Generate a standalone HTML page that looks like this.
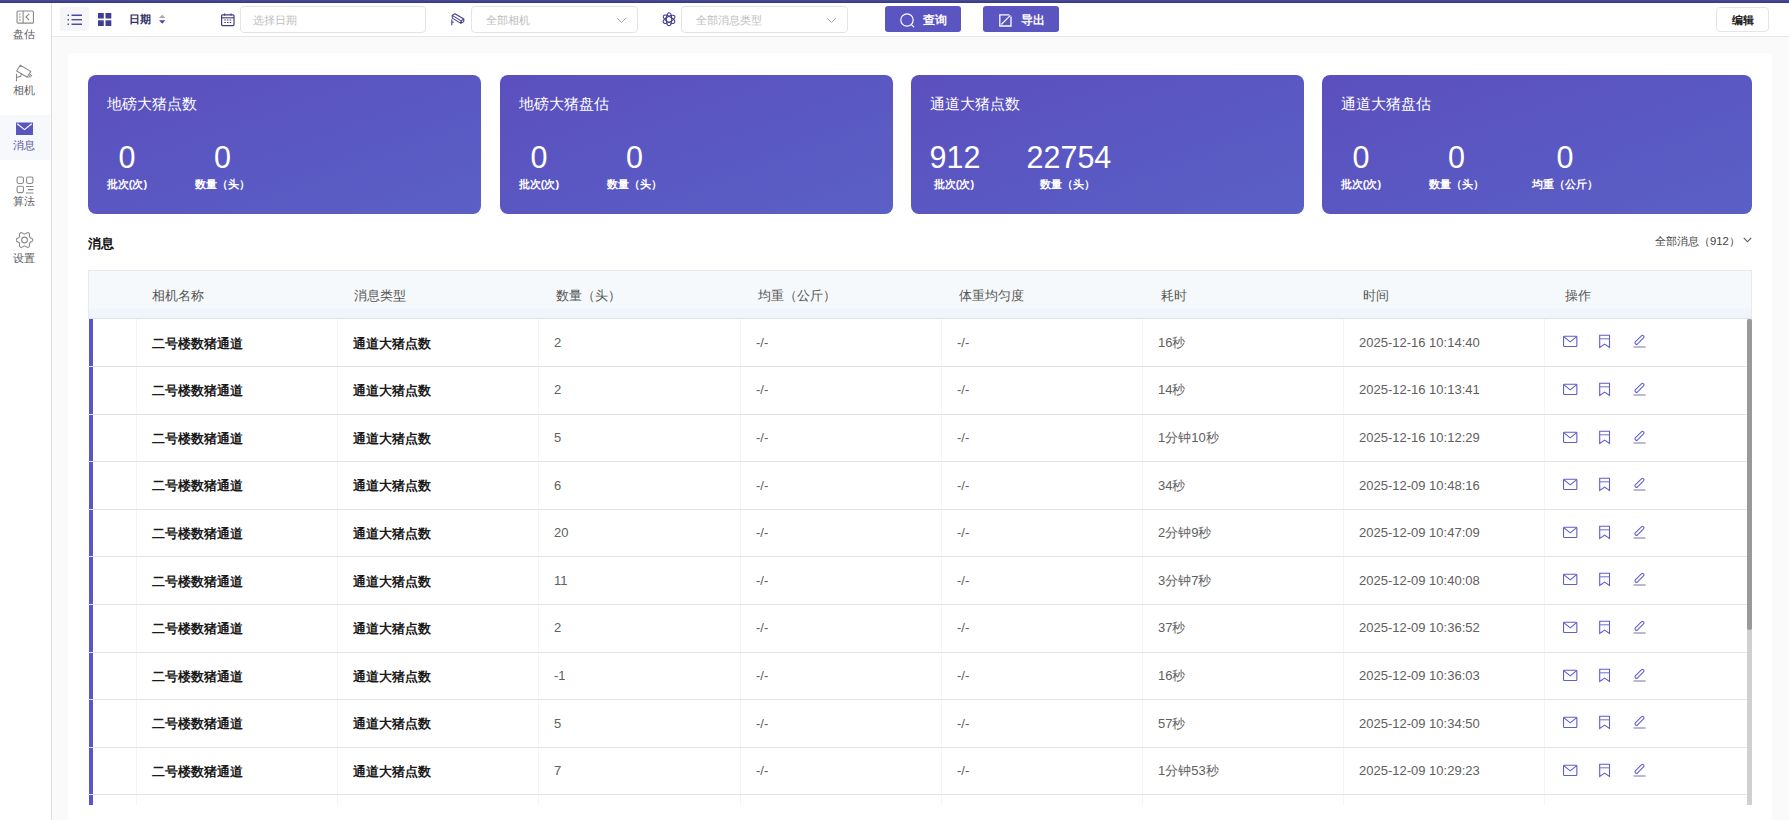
<!DOCTYPE html>
<html><head><meta charset="utf-8"><style>
*{box-sizing:border-box;margin:0;padding:0}
html,body{width:1789px;height:820px;overflow:hidden;background:#fff;font-family:"Liberation Sans",sans-serif;color:#333}
.abs{position:absolute}
#topbar{position:absolute;left:0;top:0;width:1789px;height:2.5px;background:linear-gradient(180deg,#464b93 0%,#454a92 40%,#3a3987 60%,#3a3987 100%)}
#sidebar{position:absolute;left:0;top:2.5px;width:52px;height:818px;background:#fff;border-right:1px solid #dedede}
.nav{position:absolute;left:0;width:51px;height:46px}
.nav.active{background:#f7f8fc;height:45px}
.nav.active span{color:#5552a0}
.nav svg{position:absolute;left:15px}
.nav span{position:absolute;left:0;width:48px;text-align:center;font-size:11px;line-height:12px;color:#5c5c66}
#toolbar{position:absolute;left:52px;top:2.5px;width:1737px;height:34px;background:#fff;border-bottom:1px solid #e6e6e6}
#gray{position:absolute;left:52px;top:37px;width:1737px;height:783px;background:#fafafa}
#panel{position:absolute;left:68px;top:53.3px;width:1704px;height:800px;background:#fff;box-shadow:0 0 3px rgba(0,0,0,0.015)}
.inp{position:absolute;top:3.8px;height:26.7px;border:1px solid #e4e4e4;border-radius:4px;background:#fff;font-size:11.2px;color:#bdbdbd;line-height:26px;padding-left:11px}
.chev{position:absolute;right:10px;top:9.3px}
.btn{position:absolute;top:3.6px;height:26px;width:75.5px;border-radius:3px;background:#5b55c2;color:#fff;font-size:12px;line-height:26px;font-weight:bold}
.btn span{position:absolute;left:38px;top:1px}
.btn svg{position:absolute}
.card{position:absolute;top:74.5px;height:139.5px;border-radius:8px;background:linear-gradient(160deg,#5b4fbe 0%,#5a59c3 60%,#5b60c5 100%);color:#fff}
.card .t{position:absolute;left:18.5px;top:19.5px;font-size:15px;line-height:20px}
.stat{position:absolute;top:66.5px;text-align:center}
.stat .n{font-size:30.5px;line-height:32px;display:block;white-space:nowrap}
.stat .l{font-size:11px;line-height:14px;display:block;white-space:nowrap;margin-top:3.5px;font-weight:bold}
#sect{position:absolute;left:88px;top:236px;font-size:12.7px;font-weight:bold;color:#111;line-height:16px}
#allmsg{position:absolute;left:1655px;top:234px;font-size:11.3px;color:#444;line-height:14px;white-space:nowrap}
#table{position:absolute;left:88px;top:270.2px;width:1664px;height:560px}
#thead{position:absolute;left:0;top:0;width:1664px;height:48.8px;background:linear-gradient(180deg,#f5f9fb 0%,#f5f9fb 78%,#f0f5fc 82%,#f0f5fc 100%);border:1px solid #e6e9ed;border-bottom:1px solid #dfe3e8}
#table .h{position:absolute;top:17px;font-size:13px;line-height:16px;color:#555;white-space:nowrap}
#thead .h{margin-left:-88px;top:17px}
.row{position:absolute;left:0;width:1659px;height:47.6px;border-bottom:1px solid #e3e3e3;background:transparent}
.row .bar{position:absolute;left:1px;top:0;width:4px;height:100%;background:#5b55c8}
.row .c{position:absolute;margin-left:-88px;top:15.5px;font-size:13px;line-height:16px;color:#606060;white-space:nowrap}
.row .c.b{color:#1a1a1a;font-weight:bold;top:16.3px}
.ops svg{position:absolute;margin-left:-88px}
.vl{position:absolute;top:48.8px;width:1px;height:486px;background:#f4f4f4;margin-left:-88px}
#table>.vl{}
#sb-track{position:absolute;left:1659px;top:48.8px;width:5px;height:486px;background:#d0d0d0}
#sb-thumb{position:absolute;left:1659px;top:48.8px;width:5px;height:311px;border-radius:3px;background:#9a9a9a}

</style></head><body>
<div id="topbar"></div>
<div id="gray"></div>
<div id="panel"></div>
<div id="sidebar">
  <div class="nav" style="top:0">
    <svg width="19" height="15" viewBox="0 0 19 15" style="top:7.5px;left:15.5px"><rect x="1.05" y="0.95" width="16.4" height="12.2" rx="1" fill="none" stroke="#8a8a8a" stroke-width="1.1"/><path d="M7.1 1 V13.1" stroke="#8a8a8a" stroke-width="1.1"/><path d="M3.9 3.4 V5.2 M3.9 6.2 V8 M3.9 9 V10.8" stroke="#8a8a8a" stroke-width="1"/><path d="M13.2 3.8 L9.9 7 L13.2 10.2" fill="none" stroke="#8a8a8a" stroke-width="1.1"/></svg>
    <span style="top:25px">盘估</span>
  </div>
  <div class="nav" style="top:55px">
    <svg width="19" height="19" viewBox="0 0 19 19" style="top:6px"><path d="M5.2 1.2 L15.8 7.4 L12.3 13.2 L1.7 7 Z" fill="none" stroke="#8a8a8a" stroke-width="1.1" stroke-linejoin="round"/><path d="M15.96 9.85 L13.69 13.62 M16.91 10.79 L15.33 13.4" stroke="#8a8a8a" stroke-width="1"/><path d="M1.5 9.8 V17.2 M1.5 13.6 L5.6 12.3 L6.6 9.9" fill="none" stroke="#8a8a8a" stroke-width="1.1"/></svg>
    <span style="top:26.5px">相机</span>
  </div>
  <div class="nav active" style="top:112px">
    <svg width="19" height="14" viewBox="0 0 19 14" style="top:7.5px"><rect x="1" y="0.5" width="17" height="12.5" fill="#5b55c2"/><path d="M2.2 1.8 L9.5 7.6 L16.8 1.8" fill="none" stroke="#fff" stroke-width="1.2"/></svg>
    <span style="top:24.5px">消息</span>
  </div>
  <div class="nav" style="top:167px">
    <svg width="19" height="18" viewBox="0 0 19 18" style="top:6px;left:15.5px"><rect x="1.05" y="1.05" width="6.4" height="6.4" rx="1.6" fill="none" stroke="#8a8a8a" stroke-width="1.1"/><rect x="10.55" y="1.05" width="6.4" height="6.4" rx="1.6" fill="none" stroke="#8a8a8a" stroke-width="1.1"/><rect x="1.05" y="10.25" width="6.4" height="6.4" rx="1.6" fill="none" stroke="#8a8a8a" stroke-width="1.1"/><path d="M10 10.4 H17.5 M12 13.6 H17.5 M10 16.9 H17.5" stroke="#8a8a8a" stroke-width="1.05"/></svg>
    <span style="top:25.5px">算法</span>
  </div>
  <div class="nav" style="top:223px">
    <svg width="19" height="17" viewBox="0 0 19 17" style="top:6.5px;left:15.5px"><path d="M16.75 8.00 L16.68 7.57 L16.49 7.16 L16.18 6.78 L15.79 6.45 L15.36 6.16 L14.91 5.92 L14.50 5.70 L14.14 5.49 L13.85 5.27 L13.65 5.03 L13.54 4.73 L13.49 4.37 L13.49 3.96 L13.51 3.49 L13.52 2.98 L13.49 2.46 L13.39 1.96 L13.22 1.50 L12.96 1.13 L12.62 0.86 L12.22 0.70 L11.77 0.66 L11.29 0.74 L10.80 0.91 L10.34 1.14 L9.90 1.40 L9.50 1.66 L9.14 1.86 L8.81 2.00 L8.50 2.05 L8.19 2.00 L7.86 1.86 L7.50 1.66 L7.10 1.40 L6.66 1.14 L6.20 0.91 L5.71 0.74 L5.23 0.66 L4.78 0.70 L4.38 0.86 L4.04 1.13 L3.78 1.50 L3.61 1.96 L3.51 2.46 L3.48 2.98 L3.49 3.49 L3.51 3.96 L3.51 4.37 L3.46 4.73 L3.35 5.03 L3.15 5.27 L2.86 5.49 L2.50 5.70 L2.09 5.92 L1.64 6.16 L1.21 6.45 L0.82 6.78 L0.51 7.16 L0.32 7.57 L0.25 8.00 L0.32 8.43 L0.51 8.84 L0.82 9.22 L1.21 9.55 L1.64 9.84 L2.09 10.08 L2.50 10.30 L2.86 10.51 L3.15 10.73 L3.35 10.97 L3.46 11.27 L3.51 11.63 L3.51 12.04 L3.49 12.51 L3.48 13.02 L3.51 13.54 L3.61 14.04 L3.78 14.50 L4.04 14.87 L4.37 15.14 L4.78 15.30 L5.23 15.34 L5.71 15.26 L6.20 15.09 L6.66 14.86 L7.10 14.60 L7.50 14.34 L7.86 14.14 L8.19 14.00 L8.50 13.95 L8.81 14.00 L9.14 14.14 L9.50 14.34 L9.90 14.60 L10.34 14.86 L10.80 15.09 L11.29 15.26 L11.77 15.34 L12.22 15.30 L12.62 15.14 L12.96 14.87 L13.22 14.50 L13.39 14.04 L13.49 13.54 L13.52 13.02 L13.51 12.51 L13.49 12.04 L13.49 11.63 L13.54 11.27 L13.65 10.97 L13.85 10.73 L14.14 10.51 L14.50 10.30 L14.91 10.08 L15.36 9.84 L15.79 9.55 L16.18 9.22 L16.49 8.84 L16.68 8.43 L16.75 8.00Z" fill="none" stroke="#8a8a8a" stroke-width="1.1" stroke-linejoin="round"/><circle cx="8.5" cy="8" r="2.9" fill="none" stroke="#8a8a8a" stroke-width="1.1"/></svg>
    <span style="top:26px">设置</span>
  </div>
</div>
<div id="toolbar">
  <div class="abs" style="left:8px;top:4.5px;width:29px;height:24px;background:#f6f6f8;border-radius:2px"></div>
  <svg class="abs" style="left:15px;top:11px" width="16" height="12" viewBox="0 0 16 12"><path d="M0.5 1.2 H2 M0.5 5.7 H2 M0.5 10.2 H2" stroke="#55558a" stroke-width="1.4"/><path d="M4.5 1.2 H15 M4.5 10.2 H15" stroke="#4a48a8" stroke-width="1.4"/><path d="M4.5 5.7 H15" stroke="#50508a" stroke-width="1.4"/></svg>
  <svg class="abs" style="left:46px;top:10px" width="14" height="14" viewBox="0 0 14 14"><rect x="0" y="0" width="5.8" height="5.5" fill="#3f3d94"/><rect x="7.5" y="0" width="5.8" height="5.5" fill="#3f3d94"/><rect x="0" y="7.3" width="5.8" height="5.7" fill="#3f3d94"/><rect x="7.5" y="7.3" width="5.8" height="5.7" fill="#3f3d94"/></svg>
  <div class="abs" style="left:77px;top:9px;font-size:11px;line-height:15px;color:#2f2f60;font-weight:bold">日期</div>
  <svg class="abs" style="left:105.5px;top:11.5px" width="9" height="11" viewBox="0 0 9 11"><path d="M1 4.1 L4.2 0.8 L7.4 4.1 Z" fill="#a8a8b0"/><path d="M1 6.2 L4.2 9.7 L7.4 6.2 Z" fill="#4a48a0"/></svg>
  <svg class="abs" style="left:169px;top:10px" width="15" height="14" viewBox="0 0 15 14"><rect x="0.6" y="1.8" width="12.4" height="10.8" rx="1" fill="none" stroke="#3f3d80" stroke-width="1.2"/><path d="M0.6 4.8 H13" stroke="#3f3d80" stroke-width="1.1"/><path d="M3.6 0.6 V2.6 M10 0.6 V2.6" stroke="#3f3d80" stroke-width="1.2"/><path d="M3.3 7 h1.5 M6 7 h1.5 M8.7 7 h1.5 M3.3 9.5 h1.5 M6 9.5 h1.5 M8.7 9.5 h1.5" stroke="#3f3d80" stroke-width="1.1"/></svg>
  <div class="inp" style="left:187.8px;width:186.7px;padding-left:11.8px">选择日期</div>
  <svg class="abs" style="left:397px;top:10.5px" width="17" height="14" viewBox="0 0 17 14"><path d="M3.2 2.4 L5.9 0.7 L14.8 6 L12.2 7.9 Z" fill="none" stroke="#3f3d88" stroke-width="1.05" stroke-linejoin="round"/><path d="M3.2 2.4 L3.3 5.1 L11.8 10.4 L14.8 8.5 L14.8 6 M12.2 7.9 L11.8 10.4" fill="none" stroke="#3f3d88" stroke-width="1.05" stroke-linejoin="round"/><path d="M2.8 6.4 V12.2 M2.8 9.6 L4.6 8.9" fill="none" stroke="#5552a0" stroke-width="1.2"/></svg>
  <div class="inp" style="left:418.5px;width:167.5px;padding-left:14px">全部相机<svg class="chev" width="11" height="7" viewBox="0 0 11 7"><path d="M1 1 L5.5 5.5 L10 1" fill="none" stroke="#a8a8a8" stroke-width="1"/></svg></div>
  <svg class="abs" style="left:610px;top:9.5px" width="15" height="15" viewBox="0 0 15 15"><g fill="none" stroke="#3f3d90" stroke-width="1.05"><ellipse cx="7" cy="7.3" rx="6.5" ry="2.7" transform="rotate(90 7 7.3)"/><ellipse cx="7" cy="7.3" rx="6.5" ry="2.7" transform="rotate(30 7 7.3)"/><ellipse cx="7" cy="7.3" rx="6.5" ry="2.7" transform="rotate(150 7 7.3)"/></g></svg>
  <div class="inp" style="left:628.8px;width:167.7px;padding-left:14.2px">全部消息类型<svg class="chev" width="11" height="7" viewBox="0 0 11 7"><path d="M1 1 L5.5 5.5 L10 1" fill="none" stroke="#a8a8a8" stroke-width="1"/></svg></div>
  <div class="btn" style="left:833px"><svg width="16" height="16" viewBox="0 0 16 16" style="left:14.5px;top:6.7px"><circle cx="7" cy="7" r="6.2" fill="none" stroke="#fff" stroke-width="1.2"/><path d="M11.4 11.6 L14 14.2" stroke="#fff" stroke-width="1.2"/></svg><span>查询</span></div>
  <div class="btn" style="left:931px"><svg width="14" height="14" viewBox="0 0 14 14" style="left:15.5px;top:7.5px"><path d="M10.3 0.8 H0.8 V12 H12 V2.6" fill="none" stroke="#fff" stroke-width="1.3"/><path d="M2.3 10.5 L11.4 1.4" stroke="#fff" stroke-width="1.1"/></svg><span>导出</span></div>
  <div class="abs" style="left:1663.8px;top:4.6px;width:53.7px;height:24.6px;border:1px solid #e5e5e5;border-radius:4px;font-size:11px;line-height:24px;text-align:center;color:#222;font-weight:bold">编辑</div>
</div>
<div class="card" style="left:88px;width:393px"><div class="t">地磅大猪点数</div>
  <div class="stat" style="left:18.5px;width:41px"><span class="n">0</span><span class="l">批次(次)</span></div>
  <div class="stat" style="left:106.5px;width:56px"><span class="n">0</span><span class="l">数量（头）</span></div>
</div>
<div class="card" style="left:500px;width:392.5px"><div class="t">地磅大猪盘估</div>
  <div class="stat" style="left:18.5px;width:41px"><span class="n">0</span><span class="l">批次(次)</span></div>
  <div class="stat" style="left:106.5px;width:56px"><span class="n">0</span><span class="l">数量（头）</span></div>
</div>
<div class="card" style="left:911px;width:392.5px"><div class="t">通道大猪点数</div>
  <div class="stat" style="left:18.5px;width:49px"><span class="n">912</span><span class="l">批次(次)</span></div>
  <div class="stat" style="left:115.5px;width:82px"><span class="n">22754</span><span class="l">数量（头）</span></div>
</div>
<div class="card" style="left:1322px;width:430px"><div class="t">通道大猪盘估</div>
  <div class="stat" style="left:18.5px;width:41px"><span class="n">0</span><span class="l">批次(次)</span></div>
  <div class="stat" style="left:106.5px;width:56px"><span class="n">0</span><span class="l">数量（头）</span></div>
  <div class="stat" style="left:209.5px;width:67px"><span class="n">0</span><span class="l">均重（公斤）</span></div>
</div>
<div id="sect">消息</div>
<div id="allmsg">全部消息（912）<svg style="position:absolute;left:88px;top:3px" width="9" height="6" viewBox="0 0 9 6"><path d="M0.8 0.8 L4.5 4.8 L8.2 0.8" fill="none" stroke="#555" stroke-width="1.1"/></svg></div>

<div id="table">
<div id="thead">
<div class="h" style="left:151px">相机名称</div>
<div class="h" style="left:353px">消息类型</div>
<div class="h" style="left:555px">数量（头）</div>
<div class="h" style="left:757px">均重（公斤）</div>
<div class="h" style="left:958px">体重均匀度</div>
<div class="h" style="left:1160px">耗时</div>
<div class="h" style="left:1362px">时间</div>
<div class="h" style="left:1564px">操作</div>
</div>
<div class="vl" style="left:136px"></div><div class="vl" style="left:337px"></div><div class="vl" style="left:538px"></div><div class="vl" style="left:739.5px"></div><div class="vl" style="left:941px"></div><div class="vl" style="left:1142px"></div><div class="vl" style="left:1343px"></div><div class="vl" style="left:1544px"></div>
<div class="row" style="top:49.20px">
<div class="bar"></div>
<div class="c b" style="left:151.7px">二号楼数猪通道</div>
<div class="c b" style="left:353.3px">通道大猪点数</div>
<div class="c" style="left:554px">2</div>
<div class="c" style="left:756px">-/-</div>
<div class="c" style="left:957px">-/-</div>
<div class="c" style="left:1158px">16秒</div>
<div class="c" style="left:1359px">2025-12-16 10:14:40</div>
<div class="ops"><svg width="16" height="14" viewBox="0 0 16 14" style="left:1562px;top:15px"><rect x="1.55" y="2.2" width="13.3" height="10.3" rx="0.8" fill="none" stroke="#5d5dcc" stroke-width="1.1"/><path d="M2 2.8 L8.2 7.9 L14.4 2.8" fill="none" stroke="#5d5dcc" stroke-width="1.1"/></svg>
<svg width="14" height="16" viewBox="0 0 14 16" style="left:1597px;top:15px"><path d="M2.7 1.2 H12.5 V13.4 L7.6 10.1 L2.7 13.4 Z" fill="none" stroke="#5d5dcc" stroke-width="1.1" stroke-linejoin="miter"/><path d="M2.7 4.8 H12.5" stroke="#7a7ad4" stroke-width="1.1"/></svg>
<svg width="16" height="16" viewBox="0 0 16 16" style="left:1631px;top:15px"><rect x="-1.45" y="-5.6" width="2.9" height="11.2" rx="1.1" transform="translate(8.5 5.8) rotate(45)" fill="none" stroke="#5d5dcc" stroke-width="1.05"/><path d="M2.5 13.0 H14.6" stroke="#8a8abb" stroke-width="1.2"/></svg></div>
</div><div class="row" style="top:96.80px">
<div class="bar"></div>
<div class="c b" style="left:151.7px">二号楼数猪通道</div>
<div class="c b" style="left:353.3px">通道大猪点数</div>
<div class="c" style="left:554px">2</div>
<div class="c" style="left:756px">-/-</div>
<div class="c" style="left:957px">-/-</div>
<div class="c" style="left:1158px">14秒</div>
<div class="c" style="left:1359px">2025-12-16 10:13:41</div>
<div class="ops"><svg width="16" height="14" viewBox="0 0 16 14" style="left:1562px;top:15px"><rect x="1.55" y="2.2" width="13.3" height="10.3" rx="0.8" fill="none" stroke="#5d5dcc" stroke-width="1.1"/><path d="M2 2.8 L8.2 7.9 L14.4 2.8" fill="none" stroke="#5d5dcc" stroke-width="1.1"/></svg>
<svg width="14" height="16" viewBox="0 0 14 16" style="left:1597px;top:15px"><path d="M2.7 1.2 H12.5 V13.4 L7.6 10.1 L2.7 13.4 Z" fill="none" stroke="#5d5dcc" stroke-width="1.1" stroke-linejoin="miter"/><path d="M2.7 4.8 H12.5" stroke="#7a7ad4" stroke-width="1.1"/></svg>
<svg width="16" height="16" viewBox="0 0 16 16" style="left:1631px;top:15px"><rect x="-1.45" y="-5.6" width="2.9" height="11.2" rx="1.1" transform="translate(8.5 5.8) rotate(45)" fill="none" stroke="#5d5dcc" stroke-width="1.05"/><path d="M2.5 13.0 H14.6" stroke="#8a8abb" stroke-width="1.2"/></svg></div>
</div><div class="row" style="top:144.40px">
<div class="bar"></div>
<div class="c b" style="left:151.7px">二号楼数猪通道</div>
<div class="c b" style="left:353.3px">通道大猪点数</div>
<div class="c" style="left:554px">5</div>
<div class="c" style="left:756px">-/-</div>
<div class="c" style="left:957px">-/-</div>
<div class="c" style="left:1158px">1分钟10秒</div>
<div class="c" style="left:1359px">2025-12-16 10:12:29</div>
<div class="ops"><svg width="16" height="14" viewBox="0 0 16 14" style="left:1562px;top:15px"><rect x="1.55" y="2.2" width="13.3" height="10.3" rx="0.8" fill="none" stroke="#5d5dcc" stroke-width="1.1"/><path d="M2 2.8 L8.2 7.9 L14.4 2.8" fill="none" stroke="#5d5dcc" stroke-width="1.1"/></svg>
<svg width="14" height="16" viewBox="0 0 14 16" style="left:1597px;top:15px"><path d="M2.7 1.2 H12.5 V13.4 L7.6 10.1 L2.7 13.4 Z" fill="none" stroke="#5d5dcc" stroke-width="1.1" stroke-linejoin="miter"/><path d="M2.7 4.8 H12.5" stroke="#7a7ad4" stroke-width="1.1"/></svg>
<svg width="16" height="16" viewBox="0 0 16 16" style="left:1631px;top:15px"><rect x="-1.45" y="-5.6" width="2.9" height="11.2" rx="1.1" transform="translate(8.5 5.8) rotate(45)" fill="none" stroke="#5d5dcc" stroke-width="1.05"/><path d="M2.5 13.0 H14.6" stroke="#8a8abb" stroke-width="1.2"/></svg></div>
</div><div class="row" style="top:192.00px">
<div class="bar"></div>
<div class="c b" style="left:151.7px">二号楼数猪通道</div>
<div class="c b" style="left:353.3px">通道大猪点数</div>
<div class="c" style="left:554px">6</div>
<div class="c" style="left:756px">-/-</div>
<div class="c" style="left:957px">-/-</div>
<div class="c" style="left:1158px">34秒</div>
<div class="c" style="left:1359px">2025-12-09 10:48:16</div>
<div class="ops"><svg width="16" height="14" viewBox="0 0 16 14" style="left:1562px;top:15px"><rect x="1.55" y="2.2" width="13.3" height="10.3" rx="0.8" fill="none" stroke="#5d5dcc" stroke-width="1.1"/><path d="M2 2.8 L8.2 7.9 L14.4 2.8" fill="none" stroke="#5d5dcc" stroke-width="1.1"/></svg>
<svg width="14" height="16" viewBox="0 0 14 16" style="left:1597px;top:15px"><path d="M2.7 1.2 H12.5 V13.4 L7.6 10.1 L2.7 13.4 Z" fill="none" stroke="#5d5dcc" stroke-width="1.1" stroke-linejoin="miter"/><path d="M2.7 4.8 H12.5" stroke="#7a7ad4" stroke-width="1.1"/></svg>
<svg width="16" height="16" viewBox="0 0 16 16" style="left:1631px;top:15px"><rect x="-1.45" y="-5.6" width="2.9" height="11.2" rx="1.1" transform="translate(8.5 5.8) rotate(45)" fill="none" stroke="#5d5dcc" stroke-width="1.05"/><path d="M2.5 13.0 H14.6" stroke="#8a8abb" stroke-width="1.2"/></svg></div>
</div><div class="row" style="top:239.60px">
<div class="bar"></div>
<div class="c b" style="left:151.7px">二号楼数猪通道</div>
<div class="c b" style="left:353.3px">通道大猪点数</div>
<div class="c" style="left:554px">20</div>
<div class="c" style="left:756px">-/-</div>
<div class="c" style="left:957px">-/-</div>
<div class="c" style="left:1158px">2分钟9秒</div>
<div class="c" style="left:1359px">2025-12-09 10:47:09</div>
<div class="ops"><svg width="16" height="14" viewBox="0 0 16 14" style="left:1562px;top:15px"><rect x="1.55" y="2.2" width="13.3" height="10.3" rx="0.8" fill="none" stroke="#5d5dcc" stroke-width="1.1"/><path d="M2 2.8 L8.2 7.9 L14.4 2.8" fill="none" stroke="#5d5dcc" stroke-width="1.1"/></svg>
<svg width="14" height="16" viewBox="0 0 14 16" style="left:1597px;top:15px"><path d="M2.7 1.2 H12.5 V13.4 L7.6 10.1 L2.7 13.4 Z" fill="none" stroke="#5d5dcc" stroke-width="1.1" stroke-linejoin="miter"/><path d="M2.7 4.8 H12.5" stroke="#7a7ad4" stroke-width="1.1"/></svg>
<svg width="16" height="16" viewBox="0 0 16 16" style="left:1631px;top:15px"><rect x="-1.45" y="-5.6" width="2.9" height="11.2" rx="1.1" transform="translate(8.5 5.8) rotate(45)" fill="none" stroke="#5d5dcc" stroke-width="1.05"/><path d="M2.5 13.0 H14.6" stroke="#8a8abb" stroke-width="1.2"/></svg></div>
</div><div class="row" style="top:287.20px">
<div class="bar"></div>
<div class="c b" style="left:151.7px">二号楼数猪通道</div>
<div class="c b" style="left:353.3px">通道大猪点数</div>
<div class="c" style="left:554px">11</div>
<div class="c" style="left:756px">-/-</div>
<div class="c" style="left:957px">-/-</div>
<div class="c" style="left:1158px">3分钟7秒</div>
<div class="c" style="left:1359px">2025-12-09 10:40:08</div>
<div class="ops"><svg width="16" height="14" viewBox="0 0 16 14" style="left:1562px;top:15px"><rect x="1.55" y="2.2" width="13.3" height="10.3" rx="0.8" fill="none" stroke="#5d5dcc" stroke-width="1.1"/><path d="M2 2.8 L8.2 7.9 L14.4 2.8" fill="none" stroke="#5d5dcc" stroke-width="1.1"/></svg>
<svg width="14" height="16" viewBox="0 0 14 16" style="left:1597px;top:15px"><path d="M2.7 1.2 H12.5 V13.4 L7.6 10.1 L2.7 13.4 Z" fill="none" stroke="#5d5dcc" stroke-width="1.1" stroke-linejoin="miter"/><path d="M2.7 4.8 H12.5" stroke="#7a7ad4" stroke-width="1.1"/></svg>
<svg width="16" height="16" viewBox="0 0 16 16" style="left:1631px;top:15px"><rect x="-1.45" y="-5.6" width="2.9" height="11.2" rx="1.1" transform="translate(8.5 5.8) rotate(45)" fill="none" stroke="#5d5dcc" stroke-width="1.05"/><path d="M2.5 13.0 H14.6" stroke="#8a8abb" stroke-width="1.2"/></svg></div>
</div><div class="row" style="top:334.80px">
<div class="bar"></div>
<div class="c b" style="left:151.7px">二号楼数猪通道</div>
<div class="c b" style="left:353.3px">通道大猪点数</div>
<div class="c" style="left:554px">2</div>
<div class="c" style="left:756px">-/-</div>
<div class="c" style="left:957px">-/-</div>
<div class="c" style="left:1158px">37秒</div>
<div class="c" style="left:1359px">2025-12-09 10:36:52</div>
<div class="ops"><svg width="16" height="14" viewBox="0 0 16 14" style="left:1562px;top:15px"><rect x="1.55" y="2.2" width="13.3" height="10.3" rx="0.8" fill="none" stroke="#5d5dcc" stroke-width="1.1"/><path d="M2 2.8 L8.2 7.9 L14.4 2.8" fill="none" stroke="#5d5dcc" stroke-width="1.1"/></svg>
<svg width="14" height="16" viewBox="0 0 14 16" style="left:1597px;top:15px"><path d="M2.7 1.2 H12.5 V13.4 L7.6 10.1 L2.7 13.4 Z" fill="none" stroke="#5d5dcc" stroke-width="1.1" stroke-linejoin="miter"/><path d="M2.7 4.8 H12.5" stroke="#7a7ad4" stroke-width="1.1"/></svg>
<svg width="16" height="16" viewBox="0 0 16 16" style="left:1631px;top:15px"><rect x="-1.45" y="-5.6" width="2.9" height="11.2" rx="1.1" transform="translate(8.5 5.8) rotate(45)" fill="none" stroke="#5d5dcc" stroke-width="1.05"/><path d="M2.5 13.0 H14.6" stroke="#8a8abb" stroke-width="1.2"/></svg></div>
</div><div class="row" style="top:382.40px">
<div class="bar"></div>
<div class="c b" style="left:151.7px">二号楼数猪通道</div>
<div class="c b" style="left:353.3px">通道大猪点数</div>
<div class="c" style="left:554px">-1</div>
<div class="c" style="left:756px">-/-</div>
<div class="c" style="left:957px">-/-</div>
<div class="c" style="left:1158px">16秒</div>
<div class="c" style="left:1359px">2025-12-09 10:36:03</div>
<div class="ops"><svg width="16" height="14" viewBox="0 0 16 14" style="left:1562px;top:15px"><rect x="1.55" y="2.2" width="13.3" height="10.3" rx="0.8" fill="none" stroke="#5d5dcc" stroke-width="1.1"/><path d="M2 2.8 L8.2 7.9 L14.4 2.8" fill="none" stroke="#5d5dcc" stroke-width="1.1"/></svg>
<svg width="14" height="16" viewBox="0 0 14 16" style="left:1597px;top:15px"><path d="M2.7 1.2 H12.5 V13.4 L7.6 10.1 L2.7 13.4 Z" fill="none" stroke="#5d5dcc" stroke-width="1.1" stroke-linejoin="miter"/><path d="M2.7 4.8 H12.5" stroke="#7a7ad4" stroke-width="1.1"/></svg>
<svg width="16" height="16" viewBox="0 0 16 16" style="left:1631px;top:15px"><rect x="-1.45" y="-5.6" width="2.9" height="11.2" rx="1.1" transform="translate(8.5 5.8) rotate(45)" fill="none" stroke="#5d5dcc" stroke-width="1.05"/><path d="M2.5 13.0 H14.6" stroke="#8a8abb" stroke-width="1.2"/></svg></div>
</div><div class="row" style="top:430.00px">
<div class="bar"></div>
<div class="c b" style="left:151.7px">二号楼数猪通道</div>
<div class="c b" style="left:353.3px">通道大猪点数</div>
<div class="c" style="left:554px">5</div>
<div class="c" style="left:756px">-/-</div>
<div class="c" style="left:957px">-/-</div>
<div class="c" style="left:1158px">57秒</div>
<div class="c" style="left:1359px">2025-12-09 10:34:50</div>
<div class="ops"><svg width="16" height="14" viewBox="0 0 16 14" style="left:1562px;top:15px"><rect x="1.55" y="2.2" width="13.3" height="10.3" rx="0.8" fill="none" stroke="#5d5dcc" stroke-width="1.1"/><path d="M2 2.8 L8.2 7.9 L14.4 2.8" fill="none" stroke="#5d5dcc" stroke-width="1.1"/></svg>
<svg width="14" height="16" viewBox="0 0 14 16" style="left:1597px;top:15px"><path d="M2.7 1.2 H12.5 V13.4 L7.6 10.1 L2.7 13.4 Z" fill="none" stroke="#5d5dcc" stroke-width="1.1" stroke-linejoin="miter"/><path d="M2.7 4.8 H12.5" stroke="#7a7ad4" stroke-width="1.1"/></svg>
<svg width="16" height="16" viewBox="0 0 16 16" style="left:1631px;top:15px"><rect x="-1.45" y="-5.6" width="2.9" height="11.2" rx="1.1" transform="translate(8.5 5.8) rotate(45)" fill="none" stroke="#5d5dcc" stroke-width="1.05"/><path d="M2.5 13.0 H14.6" stroke="#8a8abb" stroke-width="1.2"/></svg></div>
</div><div class="row" style="top:477.60px">
<div class="bar"></div>
<div class="c b" style="left:151.7px">二号楼数猪通道</div>
<div class="c b" style="left:353.3px">通道大猪点数</div>
<div class="c" style="left:554px">7</div>
<div class="c" style="left:756px">-/-</div>
<div class="c" style="left:957px">-/-</div>
<div class="c" style="left:1158px">1分钟53秒</div>
<div class="c" style="left:1359px">2025-12-09 10:29:23</div>
<div class="ops"><svg width="16" height="14" viewBox="0 0 16 14" style="left:1562px;top:15px"><rect x="1.55" y="2.2" width="13.3" height="10.3" rx="0.8" fill="none" stroke="#5d5dcc" stroke-width="1.1"/><path d="M2 2.8 L8.2 7.9 L14.4 2.8" fill="none" stroke="#5d5dcc" stroke-width="1.1"/></svg>
<svg width="14" height="16" viewBox="0 0 14 16" style="left:1597px;top:15px"><path d="M2.7 1.2 H12.5 V13.4 L7.6 10.1 L2.7 13.4 Z" fill="none" stroke="#5d5dcc" stroke-width="1.1" stroke-linejoin="miter"/><path d="M2.7 4.8 H12.5" stroke="#7a7ad4" stroke-width="1.1"/></svg>
<svg width="16" height="16" viewBox="0 0 16 16" style="left:1631px;top:15px"><rect x="-1.45" y="-5.6" width="2.9" height="11.2" rx="1.1" transform="translate(8.5 5.8) rotate(45)" fill="none" stroke="#5d5dcc" stroke-width="1.05"/><path d="M2.5 13.0 H14.6" stroke="#8a8abb" stroke-width="1.2"/></svg></div>
</div><div class="row last" style="top:525.20px;height:10px;border-bottom:none"><div class="bar"></div></div>
<div id="sb-track"></div><div id="sb-thumb"></div>
</div>
</body></html>
